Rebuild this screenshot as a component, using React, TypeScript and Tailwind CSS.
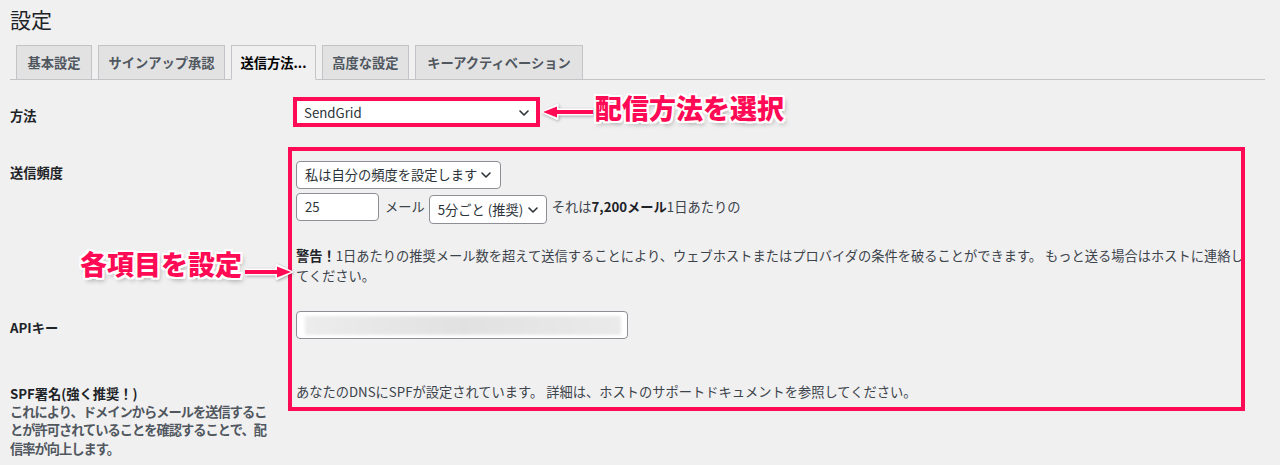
const tabs = [
  { label: '基本設定', w: 'w-[76px]' },
  { label: 'サインアップ承認', w: 'w-[127px]' },
  { label: '送信方法...', w: 'w-[85px]', active: true },
  { label: '高度な設定', w: 'w-[87px]' },
  { label: 'キーアクティベーション', w: 'w-[168px]' },
];

function Chevron() {
  return (
    <svg width="10" height="6" viewBox="0 0 10 6" fill="none">
      <path d="M1 1l4 4 4-4" stroke="#2c3338" strokeWidth="1.6" strokeLinecap="round" strokeLinejoin="round" />
    </svg>
  );
}

function ArrowLeft() {
  return (
    <svg width="54" height="16" viewBox="0 0 54 16" className="[filter:drop-shadow(1px_1px_1.5px_rgba(0,0,0,0.3))]">
      <path d="M14 8H52" stroke="#fff" strokeWidth="7" />
      <polygon points="2,8 16,1.5 16,14.5" fill="#fff" stroke="#fff" strokeWidth="3" strokeLinejoin="round" />
      <path d="M14 8H52" stroke="#ff0a54" strokeWidth="4" />
      <polygon points="2,8 16,2.5 16,13.5" fill="#ff0a54" />
    </svg>
  );
}

function ArrowRight() {
  return (
    <svg width="50" height="16" viewBox="0 0 50 16" className="[filter:drop-shadow(1px_1px_1.5px_rgba(0,0,0,0.3))]">
      <path d="M2 8H36" stroke="#fff" strokeWidth="7" />
      <polygon points="48,8 34,1.5 34,14.5" fill="#fff" stroke="#fff" strokeWidth="3" strokeLinejoin="round" />
      <path d="M2 8H36" stroke="#ff0a54" strokeWidth="4" />
      <polygon points="48,8 34,2.5 34,13.5" fill="#ff0a54" />
    </svg>
  );
}

const calloutText =
  "absolute text-[27px] leading-[27px] font-black text-[#ff0a54] whitespace-nowrap [text-shadow:-2px_-2px_0_#fff,2px_-2px_0_#fff,-2px_2px_0_#fff,2px_2px_0_#fff,0_-2px_0_#fff,0_2px_0_#fff,-2px_0_0_#fff,2px_0_0_#fff,2px_3px_5px_rgba(0,0,0,0.35)]";

export default function App() {
  return (
    <div className="relative h-[465px] w-full overflow-hidden bg-[#f0f0f1] font-['Noto_Sans_CJK_JP','Noto_Sans',sans-serif] text-[13.25px] leading-[20px] text-[#3c434a]">
      <h1 className="pl-[10px] pt-[7px] text-[21px] font-normal leading-[24px] text-[#1d2327]">設定</h1>

      <nav className="ml-[10px] mr-[15px] mt-[14px] flex gap-[6px] border-b border-[#c3c4c7] pl-[6px]">
        {tabs.map((t) => (
          <div
            key={t.label}
            className={
              t.active
                ? `${t.w} -mb-px flex h-[35px] items-center justify-center border border-[#c3c4c7] border-b-[#f0f0f1] bg-[#f0f0f1] font-bold text-black`
                : `${t.w} -mb-px flex h-[35px] items-center justify-center border border-[#c3c4c7] bg-[#e2e2e3] font-bold text-[#50575e]`
            }
          >
            {t.label}
          </div>
        ))}
      </nav>

      <div className="pl-[10px]">
        {/* 方法 */}
        <div className="flex pt-[17px]">
          <div className="w-[286px] pt-[9px] font-bold text-[#1d2327]">方法</div>
          <div className="-ml-[3px] h-[30px] w-[247px] border-4 border-[#ff0a54] bg-white">
            <div className="flex h-full items-center justify-between pl-[7px] pr-[7px] pt-[2px] text-[#2c3338]">
              <span>SendGrid</span>
              <Chevron />
            </div>
          </div>
        </div>

        {/* 送信頻度 */}
        <div className="mt-[34px] flex">
          <div className="w-[286px] pt-[2px] font-bold text-[#1d2327]">送信頻度</div>
          <div className="flex flex-col">
            <div className="flex h-[28px] w-[205px] items-center justify-between rounded-[4px] border border-[#8c8f94] bg-white pl-[8px] pr-[9px] text-[#2c3338]">
              <span>私は自分の頻度を設定します</span>
              <Chevron />
            </div>
            <div className="mt-[4px] flex items-start">
              <div className="flex h-[28px] w-[83px] items-center rounded-[4px] border border-[#8c8f94] bg-white pl-[8px] text-[#2c3338]">
                25
              </div>
              <span className="ml-[6px] leading-[28px]">メール</span>
              <div className="ml-[4px] mt-[2px] flex h-[29px] w-[118px] items-center justify-between rounded-[4px] border border-[#8c8f94] bg-white pl-[8px] pr-[8px] text-[#2c3338]">
                <span>5分ごと (推奨)</span>
                <Chevron />
              </div>
              <span className="ml-[5px] leading-[28px]">
                それは<b className="font-bold text-[#1d2327]">7,200メール</b>1日あたりの
              </span>
            </div>
            <p className="mt-[22px] whitespace-nowrap">
              <b className="font-bold text-[#1d2327]">警告！</b>
              1日あたりの推奨メール数を超えて送信することにより、ウェブホストまたはプロバイダの条件を破ることができます。 もっと送る場合はホストに連絡し
              <br />
              てください。
            </p>
          </div>
        </div>

        {/* APIキー */}
        <div className="mt-[25px] flex">
          <div className="w-[286px] pt-[7px] font-bold text-[#1d2327]">APIキー</div>
          <div className="flex h-[28px] w-[332px] items-center rounded-[4px] border border-[#8c8f94] bg-white pl-[8px] pr-[6px]">
            <div className="h-[19px] w-full bg-gradient-to-r from-[#ececec] via-[#e1e1e1] to-[#eaeaea] blur-[1.5px]" />
          </div>
        </div>

        {/* SPF */}
        <div className="mt-[43px] flex">
          <div className="w-[286px] pt-[1.5px]">
            <div className="font-bold leading-[19px] text-[#1d2327]">SPF署名(強く推奨！)</div>
            <div className="w-[266px] font-bold leading-[18.5px] tracking-[-1px] text-[#50575e]">
              これにより、ドメインからメールを送信することが許可されていることを確認することで、配信率が向上します。
            </div>
          </div>
          <p>あなたのDNSにSPFが設定されています。 詳細は、ホストのサポートドキュメントを参照してください。</p>
        </div>
      </div>

      {/* annotations */}
      <div className="absolute left-[288px] top-[147px] h-[264px] w-[957px] border-4 border-[#ff0a54]" />
      <div className="absolute left-[541px] top-[104px]">
        <ArrowLeft />
      </div>
      <div className={`${calloutText} left-[595px] top-[94px]`}>配信方法を選択</div>
      <div className={`${calloutText} left-[80px] top-[250px]`}>各項目を設定</div>
      <div className="absolute left-[243px] top-[264px]">
        <ArrowRight />
      </div>
    </div>
  );
}
